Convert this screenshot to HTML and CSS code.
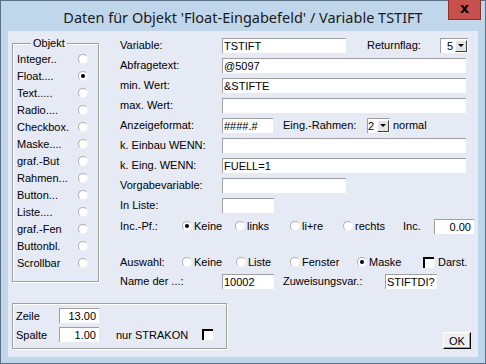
FILE: index.html
```html
<!DOCTYPE html>
<html lang="de">
<head>
    <meta charset="UTF-8">
    <title>Daten für Objekt</title>
    <link rel="stylesheet" href="styles.css">
</head>
<body>

<div class="window">
    <div class="titlebar">
        <span></span>
        <span class="title">Daten für Objekt 'Float-Eingabefeld' / Variable TSTIFT</span>
        <span class="close-cell"><span class="close">x</span></span>
    </div>

    <div class="client">
        <div class="top">
            <fieldset class="group objekt">
                <legend>Objekt</legend>
                <div class="obj-row"><span>Integer..</span><span class="radio"></span></div>
                <div class="obj-row"><span>Float....</span><span class="radio on"></span></div>
                <div class="obj-row"><span>Text.....</span><span class="radio"></span></div>
                <div class="obj-row"><span>Radio....</span><span class="radio"></span></div>
                <div class="obj-row"><span>Checkbox.</span><span class="radio"></span></div>
                <div class="obj-row"><span>Maske....</span><span class="radio"></span></div>
                <div class="obj-row"><span>graf.-But</span><span class="radio"></span></div>
                <div class="obj-row"><span>Rahmen...</span><span class="radio"></span></div>
                <div class="obj-row"><span>Button...</span><span class="radio"></span></div>
                <div class="obj-row"><span>Liste....</span><span class="radio"></span></div>
                <div class="obj-row"><span>graf.-Fen</span><span class="radio"></span></div>
                <div class="obj-row"><span>Buttonbl.</span><span class="radio"></span></div>
                <div class="obj-row"><span>Scrollbar</span><span class="radio"></span></div>
            </fieldset>

            <div class="form">
                <div class="row">
                    <span class="lbl">Variable:</span>
                    <input class="field w-md" type="text" value="TSTIFT">
                    <span class="lbl-rf">Returnflag:</span>
                    <span class="combo combo-rf"><span class="combo-val">5</span><span class="combo-btn"></span></span>
                </div>
                <div class="row">
                    <span class="lbl">Abfragetext:</span>
                    <input class="field w-lg" type="text" value="@5097">
                </div>
                <div class="row">
                    <span class="lbl">min. Wert:</span>
                    <input class="field w-lg" type="text" value="&amp;STIFTE">
                </div>
                <div class="row">
                    <span class="lbl">max. Wert:</span>
                    <input class="field w-lg" type="text" value="">
                </div>
                <div class="row">
                    <span class="lbl">Anzeigeformat:</span>
                    <input class="field w-sm" type="text" value="####.#">
                    <span class="lbl-er">Eing.-Rahmen:</span>
                    <span class="combo combo-er"><span class="combo-val">2</span><span class="combo-btn"></span></span>
                    <span class="after-combo">normal</span>
                </div>
                <div class="row">
                    <span class="lbl">k. Einbau WENN:</span>
                    <input class="field w-lg" type="text" value="">
                </div>
                <div class="row">
                    <span class="lbl">k. Eing. WENN:</span>
                    <input class="field w-lg" type="text" value="FUELL=1">
                </div>
                <div class="row">
                    <span class="lbl">Vorgabevariable:</span>
                    <input class="field w-md" type="text" value="">
                </div>
                <div class="row">
                    <span class="lbl">In Liste:</span>
                    <input class="field w-sm2" type="text" value="">
                </div>
                <div class="row row-inc">
                    <span class="lbl-opt">Inc.-Pf.:</span>
                    <span class="opt w53"><span class="radio on"></span>Keine</span>
                    <span class="opt w55"><span class="radio"></span>links</span>
                    <span class="opt w53"><span class="radio"></span>li+re</span>
                    <span class="opt w60"><span class="radio"></span>rechts</span>
                    <span class="lbl-inc">Inc.</span>
                    <input class="field num w-inc" type="text" value="0.00">
                </div>
                <div class="row row-sel">
                    <span class="lbl-opt">Auswahl:</span>
                    <span class="opt w54"><span class="radio"></span>Keine</span>
                    <span class="opt w54"><span class="radio"></span>Liste</span>
                    <span class="opt w67"><span class="radio"></span>Fenster</span>
                    <span class="opt w66"><span class="radio on"></span>Maske</span>
                    <span class="opt chk-opt"><span class="check"></span>Darst.</span>
                </div>
                <div class="row">
                    <span class="lbl">Name der ...:</span>
                    <input class="field w-sm2" type="text" value="10002">
                    <span class="lbl-zw">Zuweisungsvar.:</span>
                    <input class="field w-sm2" type="text" value="STIFTDI?">
                </div>
            </div>
        </div>

        <div class="bottom">
            <div class="group pos">
                <div class="pos-row">
                    <span class="lbl-pos">Zeile</span>
                    <input class="field num w-pos" type="text" value="13.00">
                </div>
                <div class="pos-row">
                    <span class="lbl-pos">Spalte</span>
                    <input class="field num w-pos" type="text" value="1.00">
                    <span class="lbl-strakon">nur STRAKON</span>
                    <span class="check"></span>
                </div>
            </div>
            <button class="ok" type="button">OK</button>
        </div>
    </div>
</div>

</body>
</html>
```

FILE: styles.css
```css
body {
    margin: 0;
    padding: 0;
    font-family: "Liberation Sans", Arial, sans-serif;
    font-size: 11px;
    color: #000;
    background-color: #c0d6eb;
}
.window {
    width: 486px;
    height: 364px;
    box-sizing: border-box;
    border: 1px solid #5b6f86;
    background-color: #c0d6eb;
}
.titlebar {
    height: 30px;
    display: grid;
    grid-template-columns: 1fr auto 1fr;
    align-items: center;
}
.title {
    font-family: "Noto Sans", "Open Sans", sans-serif;
    font-size: 14.5px;
    color: #1a1a1a;
    white-space: nowrap;
    padding-top: 1px;
}
.close-cell {
    align-self: start;
    display: flex;
    justify-content: flex-end;
    padding-right: 4px;
}
.close {
    width: 33px;
    height: 20px;
    box-sizing: border-box;
    margin-top: -1px;
    background-color: #c7504c;
    border: 1px solid #8a3431;
    border-top: none;
    color: #000;
    font-family: "DejaVu Sans", sans-serif;
    font-weight: bold;
    font-size: 14px;
    line-height: 17px;
    text-align: center;
}
.client {
    margin: 0 7px;
    height: 326px;
    box-sizing: border-box;
    padding: 4px 7px 8px 4px;
    background-color: #e6eaf5;
    display: flex;
    flex-direction: column;
}
.top {
    display: flex;
    align-items: flex-start;
}

/* etched group boxes */
.group {
    border: 1px solid #a0a0a0;
    box-shadow: inset 1px 1px 0 #fff, 1px 1px 0 #fff;
}
.objekt {
    width: 87px;
    min-width: 0;
    flex-shrink: 0;
    box-sizing: border-box;
    margin: 2px 0 0 0;
    padding: 0 10px 10px 4px;
}
.objekt legend {
    margin-left: 14px;
    padding: 0 2px;
    line-height: 13px;
    background-color: #e6eaf5;
}
.obj-row {
    height: 17px;
    display: flex;
    align-items: center;
    justify-content: space-between;
}

.radio {
    width: 10px;
    height: 10px;
    box-sizing: border-box;
    border-radius: 50%;
    background-color: #fff;
    border: 1px solid;
    border-color: #b0b0b0 #f4f4f4 #f4f4f4 #b0b0b0;
    display: inline-flex;
    align-items: center;
    justify-content: center;
    flex-shrink: 0;
}
.radio.on::after {
    content: "";
    width: 4px;
    height: 4px;
    border-radius: 50%;
    background-color: #000;
}
.check {
    width: 11px;
    height: 11px;
    box-sizing: border-box;
    background-color: #fff;
    border-top: 2px solid #000;
    border-left: 2px solid #000;
    flex-shrink: 0;
}

.form {
    margin-left: 21px;
    flex-shrink: 0;
    display: flex;
    flex-direction: column;
}
.row {
    height: 20px;
    display: flex;
    align-items: center;
    white-space: nowrap;
}
.row-inc {
    height: 22px;
}
.row-sel {
    height: 18px;
    margin-top: 16px;
}
.lbl {
    width: 102px;
    flex-shrink: 0;
}
.lbl-opt {
    width: 62px;
    flex-shrink: 0;
}
.lbl-rf {
    margin-left: 21px;
    width: 73px;
}
.lbl-er {
    margin-left: 10px;
    width: 84px;
}
.lbl-zw {
    margin-left: 9px;
    width: 102px;
}
.lbl-inc {
    width: 31px;
}
.after-combo {
    margin-left: 3px;
}

input.field {
    height: 15px;
    box-sizing: border-box;
    flex-shrink: 0;
    margin: 0;
    padding: 0 0 0 1px;
    border: none;
    border-top: 1px solid #a0a0a0;
    border-left: 1px solid #a0a0a0;
    background-color: #fff;
    font-family: "Liberation Sans", Arial, sans-serif;
    font-size: 11px;
    line-height: 13px;
    color: #000;
    outline: none;
}
input.num {
    text-align: right;
    padding-right: 3px;
}
.w-lg { width: 244px; }
.w-md { width: 124px; }
.w-sm { width: 51px; }
.w-sm2 { width: 52px; }
.w-inc { width: 40px; height: 16px; }
.w-pos { width: 40px; }

.combo {
    height: 15px;
    box-sizing: border-box;
    flex-shrink: 0;
    display: flex;
    align-items: center;
    background-color: #fff;
    border-top: 1px solid #a0a0a0;
    border-left: 1px solid #a0a0a0;
}
.combo-rf {
    width: 28px;
}
.combo-rf .combo-val {
    flex: 1;
    text-align: right;
    padding-right: 2px;
}
.combo-er {
    width: 23px;
}
.combo-er .combo-val {
    flex: 1;
}
.combo-btn {
    width: 12px;
    height: 12px;
    box-sizing: border-box;
    margin-right: 1px;
    background-color: #e4e4e4;
    border: 1px solid;
    border-color: #fff #404040 #404040 #fff;
    display: flex;
    align-items: center;
    justify-content: center;
}
.combo-btn::after {
    content: "";
    border-left: 3px solid transparent;
    border-right: 3px solid transparent;
    border-top: 3px solid #000;
}

.opt {
    display: flex;
    align-items: center;
    gap: 2px;
    flex-shrink: 0;
}
.w53 { width: 53px; }
.w54 { width: 54px; }
.w55 { width: 55px; }
.w60 { width: 60px; }
.w66 { width: 66px; }
.w67 { width: 67px; }
.chk-opt {
    gap: 4px;
}

.bottom {
    margin-top: 12px;
    display: flex;
    justify-content: space-between;
    align-items: flex-end;
}
.pos {
    width: 215px;
    height: 46px;
    box-sizing: border-box;
    padding: 4px 3px 6px 3px;
    display: flex;
    flex-direction: column;
    gap: 4px;
}
.pos-row {
    height: 15px;
    display: flex;
    align-items: center;
}
.lbl-pos {
    width: 43px;
}
.lbl-strakon {
    margin-left: 17px;
    width: 86px;
}
.ok {
    width: 28px;
    height: 17px;
    box-sizing: border-box;
    padding: 0;
    background-color: #f0f0f0;
    border: 1px solid;
    border-color: #fff #000 #000 #fff;
    box-shadow: inset -1px -1px 0 #a0a0a0;
    font-family: "Liberation Sans", Arial, sans-serif;
    font-size: 11px;
    color: #000;
}
```
